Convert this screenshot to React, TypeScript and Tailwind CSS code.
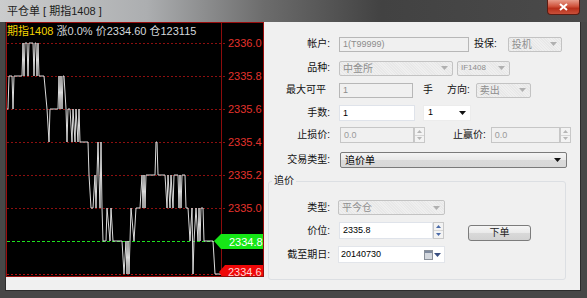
import { ReactNode } from 'react'

// price level -> y inside the chart svg (origin at the chart's inner top-left)
const LV = [20, 53, 86, 119, 152, 185, 218, 251]

// [screen x, level index]
const TICKS: [number, number][] = [
  [7, 2], [8, 2], [9, 1], [12, 1], [13, 2], [14, 1], [22, 1], [23, 0], [24, 1], [25, 0], [27, 0], [28, 1], [29, 0],
  [33, 0], [34, 1], [35, 0], [36, 0], [37, 1], [38, 0], [39, 1], [44, 1], [47, 2], [49, 3], [50, 2], [58, 2],
  [59, 1], [60, 2], [61, 1], [62, 2], [63, 1], [64, 1], [66, 2], [67, 3], [68, 2], [70, 2], [72, 3], [73, 2],
  [75, 3], [76, 2], [78, 3], [79, 2], [80, 3], [88, 3], [89, 4], [91, 5], [93, 5], [95, 4], [96, 5], [97, 4],
  [98, 3], [99, 4], [100, 5], [101, 3], [102, 5], [103, 6], [106, 6], [107, 5], [110, 6], [111, 5], [113, 6],
  [122, 6], [124, 7], [126, 6], [127, 7], [128, 6], [129, 7], [130, 6], [131, 5], [134, 6], [136, 5], [140, 5],
  [142, 4], [143, 5], [144, 4], [145, 5], [146, 4], [155, 4], [156, 3], [157, 3], [158, 4], [165, 4], [167, 5],
  [168, 4], [170, 5], [171, 4], [173, 5], [174, 4], [178, 4], [179, 5], [180, 4], [181, 5], [182, 4], [185, 4],
  [186, 5], [188, 5], [190, 6], [192, 5], [193, 7], [194, 6], [196, 5], [198, 6], [199, 5], [200, 6], [201, 5],
  [203, 5], [204, 6], [213, 6], [215, 7], [222, 7],
]

const PRICES = ['2336.0', '2335.8', '2335.6', '2335.4', '2335.2', '2335.0']

export default function App() {
  return (
    <div className="w-[587px] h-[298px] bg-[#474747] flex flex-col overflow-hidden font-['Liberation_Sans','Noto_Sans_CJK_SC',sans-serif]">
      {/* Title bar */}
      <div className="h-[22px] flex items-start justify-between bg-[linear-gradient(90deg,#cbcccd_0%,#acaeb0_25%,#6c6c6c_45%,#424242_65%,#4a4a4a_100%)]">
        <span className="ml-[7px] mt-[4px] text-[11px] leading-[14px] text-[#1c1c1c]">平仓单 [ 期指1408 ]</span>
        <button className="mr-[7px] w-[33px] h-[15px] rounded-b-[4px] border border-t-0 border-[#5b1c12] bg-[linear-gradient(180deg,#e79b8a_0%,#d0533c_45%,#b8301b_60%,#c9503a_100%)] flex items-center justify-center">
          <svg width="9" height="8" viewBox="0 0 9 8">
            <path d="M1 1 L8 7 M8 1 L1 7" stroke="#fff" strokeWidth="2" />
          </svg>
        </button>
      </div>

      {/* Client area */}
      <div className="h-[269px] ml-[5px] mr-[6px] border-x border-b border-[#2c2c2c] bg-[#f0f0f0] flex">
        <Chart />
        <OrderForm />
      </div>
    </div>
  )
}

function Chart() {
  const pts = TICKS.map(([x, l]) => `${x - 7},${LV[l]}`).join(' ')
  return (
    <div className="relative w-[258px] h-[255px] shrink-0 bg-black border border-[#9a0d0d]">
      <svg width="256" height="253" className="absolute left-0 top-0">
        {PRICES.map((p, i) => (
          <g key={p}>
            <line x1="0" x2="220" y1={LV[i] + 0.5} y2={LV[i] + 0.5} stroke="#8c0f0f" strokeDasharray="2 2" />
            <text x="221" y={LV[i] + 4} fill="#e4322c" fontSize="11" fontFamily="Liberation Sans, sans-serif">{p}</text>
          </g>
        ))}
        <line x1="0" x2="207" y1={LV[6] + 0.5} y2={LV[6] + 0.5} stroke="#1ee01e" strokeDasharray="3 2" />
        <line x1="0" x2="214" y1={LV[7] + 0.5} y2={LV[7] + 0.5} stroke="#b01010" strokeDasharray="2 2" />
        <line x1="214.5" x2="214.5" y1="0" y2="253" stroke="#8c0c0c" />
        <polyline points={pts} fill="none" stroke="#dcdcdc" strokeWidth="1" />
        <polygon points="207,218 214,211 256,211 256,226 214,226" fill="#16e616" />
        <text x="222" y="222.5" fill="#fff" fontSize="11" fontFamily="Liberation Sans, sans-serif">2334.8</text>
        <polygon points="212,249 218,242 256,242 256,258 218,258" fill="#f00808" />
        <text x="221" y="252.5" fill="#ffd6d6" fontSize="11" fontFamily="Liberation Sans, sans-serif">2334.6</text>
      </svg>
      <div className="absolute left-0 top-[1px] text-[11px] leading-[14px] text-[#d4d8dc] whitespace-nowrap">
        <span className="text-[#f2d200]">期指1408</span> 涨0.0% 价2334.60 仓123115
      </div>
    </div>
  )
}

function Arrow({ color = '#a8a8a8' }: { color?: string }) {
  return (
    <svg width="7" height="4" viewBox="0 0 7 4" className="shrink-0">
      <path d="M0 0 H7 L3.5 4 Z" fill={color} />
    </svg>
  )
}

function DisabledSelect({ text, className, small }: { text: string; className: string; small?: boolean }) {
  return (
    <div className={`h-[15px] flex items-center justify-between pl-[3px] pr-[4px] border border-[#c3c3c3] rounded-[2px] bg-[repeating-linear-gradient(45deg,#efefef_0px,#efefef_1px,#e8e8e8_1px,#e8e8e8_2px)] text-[#8e8e8e] ${className}`}>
      <span className={small ? 'text-[8px]' : 'text-[10px]'}>{text}</span>
      <Arrow color="#b0b0b0" />
    </div>
  )
}

function Spinner({ active }: { active?: boolean }) {
  const c = active ? '#4a6aa8' : '#b6b6b6'
  return (
    <div className="w-[11px] h-full flex flex-col border border-[#c8c8c8] bg-[#f3f3f3]">
      <div className="flex-1 flex items-center justify-center border-b border-[#d6d6d6]">
        <svg width="5" height="3" viewBox="0 0 5 3"><path d="M0 3 L2.5 0 L5 3 Z" fill={c} /></svg>
      </div>
      <div className="flex-1 flex items-center justify-center">
        <svg width="5" height="3" viewBox="0 0 5 3"><path d="M0 0 H5 L2.5 3 Z" fill={c} /></svg>
      </div>
    </div>
  )
}

function Label({ children, className = '' }: { children: ReactNode; className?: string }) {
  return <span className={`text-right text-[10px] leading-[12px] text-[#111] whitespace-nowrap ${className}`}>{children}</span>
}

function OrderForm() {
  return (
    <div className="flex-1 flex flex-col pt-[14px]">
      {/* 帐户 / 投保 */}
      <div className="flex items-center h-[16px]">
        <Label className="w-[66px]">帐户:</Label>
        <div className="ml-[9px] w-[130px] h-[15px] border border-[#b7b7b7] bg-[#f0f0f0] pl-[3px] text-[9px] leading-[13px] text-[#8c8c8c]">1(T99999)</div>
        <Label className="ml-[5px]">投保:</Label>
        <DisabledSelect text="投机" className="ml-[11px] w-[54px]" />
      </div>

      {/* 品种 */}
      <div className="flex items-center h-[16px] mt-[8px]">
        <Label className="w-[66px]">品种:</Label>
        <DisabledSelect text="中金所" className="ml-[9px] w-[114px]" />
        <DisabledSelect text="IF1408" small className="ml-[4px] w-[53px]" />
      </div>

      {/* 最大可平 / 方向 */}
      <div className="flex items-center h-[16px] mt-[6px]">
        <Label className="w-[66px] pr-[4px]">最大可平</Label>
        <div className="ml-[9px] w-[74px] h-[15px] border border-[#b7b7b7] bg-[#f0f0f0] pl-[3px] text-[9px] leading-[13px] text-[#8c8c8c]">1</div>
        <Label className="ml-[10px]">手</Label>
        <Label className="ml-[14px]">方向:</Label>
        <DisabledSelect text="卖出" className="ml-[6px] w-[55px]" />
      </div>

      {/* 手数 */}
      <div className="flex items-center h-[16px] mt-[7px]">
        <Label className="w-[66px]">手数:</Label>
        <div className="ml-[9px] w-[76px] h-[16px] border border-[#dfe3ea] bg-white pl-[3px] text-[9px] leading-[14px] text-black">1</div>
        <div className="ml-[8px] w-[48px] h-[16px] border border-[#ececec] bg-white flex items-center justify-between pl-[4px] pr-[4px] text-[9px] text-black">
          <span>1</span>
          <Arrow color="#111" />
        </div>
      </div>

      {/* 止损价 / 止赢价 */}
      <div className="flex items-center h-[16px] mt-[6px]">
        <Label className="w-[66px]">止损价:</Label>
        <div className="ml-[10px] flex h-[16px]">
          <div className="w-[74px] border border-[#c6c6c6] bg-[#f0f0f0] pl-[3px] text-[9px] leading-[14px] text-[#9a9a9a]">0.0</div>
          <Spinner />
        </div>
        <Label className="ml-[28px]">止赢价:</Label>
        <div className="ml-[5px] flex h-[16px]">
          <div className="w-[69px] border border-[#c6c6c6] bg-[#f0f0f0] pl-[3px] text-[9px] leading-[14px] text-[#9a9a9a]">0.0</div>
          <Spinner />
        </div>
      </div>

      {/* 交易类型 */}
      <div className="flex items-center h-[16px] mt-[9px]">
        <Label className="w-[66px]">交易类型:</Label>
        <div className="ml-[10px] w-[227px] h-[16px] rounded-[2px] border border-[#7a7a7a] bg-[linear-gradient(180deg,#f4f4f4_0%,#e8e8e8_50%,#dadada_51%,#d8d8d8_100%)] flex items-center justify-between pl-[4px] pr-[5px]">
          <span className="text-[10px] text-black">追价单</span>
          <Arrow color="#111" />
        </div>
      </div>

      {/* 追价 group */}
      <fieldset className="mt-[7px] ml-[4px] w-[298px] border border-[#dcdfe3] rounded-[3px] pb-[16px]">
        <legend className="ml-[3px] px-[2px] text-[10px] leading-[12px] text-[#111]">追价</legend>
        <div className="flex items-center h-[15px] mt-[13px]">
          <Label className="w-[61px]">类型:</Label>
          <DisabledSelect text="平今仓" className="ml-[8px] w-[107px]" />
        </div>
        <div className="flex items-start h-[17px] mt-[7px]">
          <Label className="w-[61px] mt-[3px]">价位:</Label>
          <div className="ml-[9px] flex h-[17px]">
            <div className="w-[94px] border border-[#dfe3ea] bg-white pl-[3px] text-[9px] leading-[15px] text-black">2335.8</div>
            <Spinner active />
          </div>
          <button className="ml-[24px] mt-[3px] w-[63px] h-[16px] rounded-[3px] border border-[#7c7c7c] bg-[linear-gradient(180deg,#f6f6f6_0%,#e9e9e9_50%,#d9d9d9_51%,#d2d2d2_100%)] text-[10px] leading-[14px] text-[#222]">
            下单
          </button>
        </div>
        <div className="flex items-center h-[17px] mt-[7px]">
          <Label className="w-[61px]">截至期日:</Label>
          <div className="ml-[8px] w-[107px] h-[17px] border border-[#e2e5ea] bg-white flex items-center justify-between pl-[2px] pr-[3px]">
            <span className="text-[9px] text-black">20140730</span>
            <span className="flex items-center gap-[1px]">
              <svg width="9" height="10" viewBox="0 0 9 10">
                <rect x="0.5" y="0.5" width="8" height="9" fill="#d4d8de" stroke="#8a9099" />
                <rect x="1" y="1" width="7" height="2" fill="#7e8a9e" />
              </svg>
              <Arrow color="#3a4f80" />
            </span>
          </div>
        </div>
      </fieldset>
    </div>
  )
}
